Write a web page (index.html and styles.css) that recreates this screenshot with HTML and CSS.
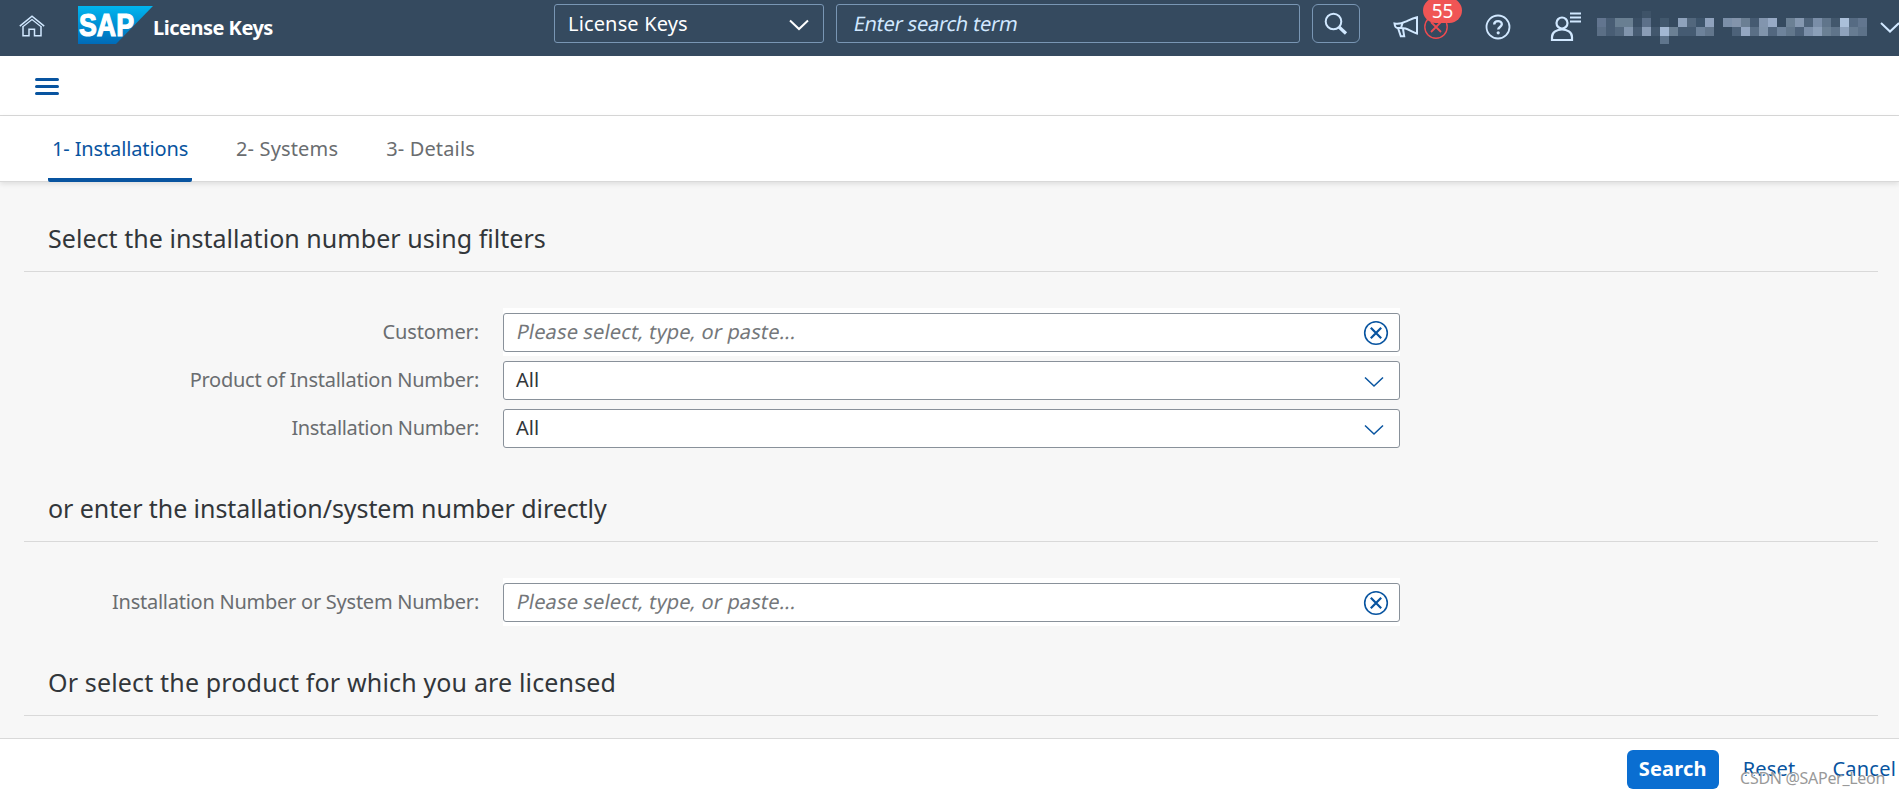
FILE: index.html
```
<!DOCTYPE html>
<html lang="en">
<head>
<meta charset="utf-8">
<title>License Keys</title>
<link rel="stylesheet" href="styles.css">
</head>
<body>
<header class="shell">
  <svg class="home" width="26" height="22" viewBox="0 0 26 22" fill="none" stroke="#d1e8ff" stroke-width="1.5"><path d="M.8 11.2 13 1.2l12.200 10M4 11v9.700h6V14.200h5.500v6.500H22V11"/><path d="M4.200 11.500 13 4.500l8.800 7" stroke-width="1.200"/></svg>
  <svg class="logo" width="75" height="38" viewBox="0 0 75 38"><defs><linearGradient id="sap" x2="0" y2="1"><stop offset="0" stop-color="#00b5ef"/><stop offset="1" stop-color="#006bb8"/></linearGradient></defs><path d="M0 0h75L38 38H0z" fill="url(#sap)"/><text class="logo-text" x="1" y="29.500" textLength="55" lengthAdjust="spacingAndGlyphs">SAP</text></svg>
  <h1 class="app-title">License Keys</h1>
  <div class="scope">License Keys<svg width="20" height="12" viewBox="0 0 20 12" fill="none" stroke="#fff" stroke-width="2"><path d="m1 1.500 9 8.500 9-8.500"/></svg></div>
  <div class="term"><span class="slant">Enter search term</span></div>
  <div class="go"><svg width="24" height="24" viewBox="0 0 24 24" fill="none" stroke="#d1e8ff" stroke-width="2"><circle cx="9.500" cy="9.500" r="7.800"/><path d="m15 15 7 6.500" stroke-width="3.200"/></svg></div>
  <div class="news">
    <svg width="28" height="24" viewBox="0 0 28 24" fill="none" stroke="#d1e8ff" stroke-width="2"><path d="M1.500 8.500c4 .8 7 .2 11-1.800 4-1.800 7-3.500 11.500-4.500v16.300c-5-1.500-8-4-11.500-5-3-.7-5-.5-7.500-.5-2 .3-3.200-1.500-3.500-4.500z"/><path d="m5 13 2.800 8.200h3.400L10 14M9.500 8 8 13"/></svg>
    <svg class="alert" width="24" height="24" viewBox="0 0 24 24" fill="none" stroke="#ee4b50" stroke-width="1.400"><circle cx="12" cy="12" r="11.200"/><path d="m7 7 10 10M17 7 7 17" stroke-width="1.800"/></svg>
    <span class="badge">55</span>
  </div>
  <svg class="help" width="26" height="26" viewBox="0 0 26 26"><circle cx="13" cy="13" r="11.500" fill="none" stroke="#d1e8ff" stroke-width="1.800"/><path d="M9.200 10.500C9.300 6 16.900 6 16.800 10.300c0 2.600-3.600 2.700-3.600 5.300" fill="none" stroke="#d1e8ff" stroke-width="2.400"/><circle cx="13.200" cy="18.800" r="1.600" fill="#d1e8ff"/></svg>
  <svg class="user" width="32" height="30" viewBox="0 0 32 30" fill="none" stroke="#d1e8ff" stroke-width="2.200"><circle cx="12" cy="11" r="5.500"/><path d="M2 28v-3c0-10 20-10 20 0v3zM20 1.500h11M20 5.500h11M20 9.500h11"/></svg>
  <svg class="name" width="272" height="33" viewBox="0 0 272 33" shape-rendering="crispEdges">
    <g id="cells"></g>
  </svg>
  <svg class="more" width="19" height="12" viewBox="0 0 19 12" fill="none" stroke="#d1e8ff" stroke-width="2"><path d="m1 1 9 8.500 9-8.500"/></svg>
</header>
<div class="toolbar"><svg width="24" height="17" viewBox="0 0 24 17" fill="none" stroke="#0854a0" stroke-width="3" stroke-linecap="round"><path d="M1.500 1.500h21M1.500 8.500h21M1.500 15.500h21"/></svg></div>
<nav class="tabs"><a class="tab active">1- Installations</a><a class="tab">2- Systems</a><a class="tab">3- Details</a></nav>
<main class="page">
  <section class="block">
    <h2 class="title t1">Select the installation number using filters</h2>
    <div class="form">
      <label class="label l1">Customer:</label>
      <div class="wrap"><div class="field hint"><span class="slant">Please select, type, or paste...</span><svg class="clear" width="26" height="26" viewBox="0 0 26 26" fill="none" stroke="#0854a0"><circle cx="13" cy="13" r="11.300" stroke-width="1.600"/><path d="m7.800 7.800 10.400 10.400M18.200 7.800 7.800 18.200" stroke-width="2.200"/></svg></div></div>
      <label class="label l2">Product of Installation Number:</label>
      <div class="wrap"><div class="field">All<svg class="arrow" width="20" height="12" viewBox="0 0 20 12" fill="none" stroke="#0854a0" stroke-width="1.500"><path d="m1 1.500 9 8.500 9-8.500"/></svg></div></div>
      <label class="label l3">Installation Number:</label>
      <div class="wrap"><div class="field">All<svg class="arrow" width="20" height="12" viewBox="0 0 20 12" fill="none" stroke="#0854a0" stroke-width="1.500"><path d="m1 1.500 9 8.500 9-8.500"/></svg></div></div>
    </div>
  </section>
  <section class="block">
    <h2 class="title t2">or enter the installation/system number directly</h2>
    <div class="form">
      <label class="label l2">Installation Number or System Number:</label>
      <div class="wrap"><div class="field hint"><span class="slant">Please select, type, or paste...</span><svg class="clear" width="26" height="26" viewBox="0 0 26 26" fill="none" stroke="#0854a0"><circle cx="13" cy="13" r="11.300" stroke-width="1.600"/><path d="m7.800 7.800 10.400 10.400M18.200 7.800 7.800 18.200" stroke-width="2.200"/></svg></div></div>
    </div>
  </section>
  <section class="block">
    <h2 class="title t3">Or select the product for which you are licensed</h2>
  </section>
</main>
<footer class="footer"><button class="btn primary">Search</button><button class="btn reset">Reset</button><button class="btn">Cancel</button><span class="mark">CSDN @SAPer_Leon</span></footer>
<script src="cells.js"></script>
</body>
</html>
```
FILE: cells.js
```
// Colours of the obscured user name, one entry per 9px cell; 0 is an empty cell.
const rows = [
  "62758f 485d74 697f92 697f92 3a4f65 5c7089 0 42586d 0 8ea2bc 52677d 3d546b 8fa2bd 0 7b8fa8 8394ab 6b7f93 455a71 8295ae 97aac5 0 6b8094 8598b0 4f647b 7a8ea8 60758b 42576c aabfd9 566b83 62768f",
  "5b6f86 485d74 53687e 8195ad 475c73 8a9db6 42576d a3b8d2 6b8094 455b72 455b72 6d829a 62768c 0 0 4d6279 94a7c1 5a6f86 8094ab 52677f 6e839b 62778c 4d627a 7b8fa9 8b9fb8 6b8094 5f748a 8ea2bc 677c92 5d7289"
];
const group = document.getElementById("cells");
function cell(x, y, height, color) {
  const r = document.createElementNS("http://www.w3.org/2000/svg", "rect");
  r.setAttribute("x", x);
  r.setAttribute("y", y);
  r.setAttribute("width", 9);
  r.setAttribute("height", height);
  r.setAttribute("fill", "#" + color);
  group.appendChild(r);
}
rows.forEach((row, j) => row.split(" ").forEach((c, i) => {
  if (c !== "0") cell(i * 9, 7 + j * 9, 9, c);
}));
cell(45, 0, 7, "3e5368");
cell(63, 25, 8, "5f758c");
```
FILE: styles.css
```
* { box-sizing: border-box; }
body { margin: 0; height: 796px; display: flex; flex-direction: column; overflow: hidden; background: #f7f7f7; color: #32363a; font: 20px/30px "Noto Sans", sans-serif; }
svg { display: block; flex: none; }
.shell { flex: none; height: 56px; display: flex; align-items: flex-start; background: #354a5f; color: #fff; }
.home { margin: 15px 0 0 19px; }
.logo { margin: 6px 0 0 33px; }
.logo-text { font: bold 31px "Liberation Sans", sans-serif; fill: #fff; stroke: #fff; stroke-width: 1.2px; }
.app-title { margin: 13px 0 0; width: 401px; font-size: 20px; letter-spacing: -0.5px; white-space: nowrap; }
.scope, .term, .go { margin-top: 4px; height: 39px; display: flex; align-items: center; border: 1px solid #7996b4; border-radius: 3px; }
.scope { width: 270px; justify-content: space-between; padding: 0 14px 0 13px; letter-spacing: 0.15px; }
.scope svg { margin-top: 2px; }
.term { width: 464px; margin-left: 12px; padding: 0 17px; color: #d1e8ff; letter-spacing: -0.25px; }
.slant { transform: skewX(-11deg); white-space: nowrap; }
.go { width: 48px; margin-left: 12px; justify-content: center; border-radius: 6px; }
.news { position: relative; width: 92px; margin: 15px 0 0 33px; }
.alert { position: absolute; left: 31px; top: 0; }
.badge { position: absolute; left: 30px; top: -17px; width: 39px; height: 25px; border-radius: 13px; background: #f05555; text-align: center; font-size: 19px; line-height: 26px; }
.help { margin: 14px 0 0; }
.user { margin: 12px 0 0 39px; }
.name { margin: 11px 0 0 15px; }
.more { margin: 22px 0 0 11px; }
.toolbar { flex: none; height: 60px; padding: 22px 0 0 35px; background: #fff; border-bottom: 1px solid #d9d9d9; }
.tabs { flex: none; height: 66px; display: flex; gap: 40px; padding-left: 48px; background: #fff; border-bottom: 1px solid #d9d9d9; box-shadow: 0 2px 5px rgba(0,0,0,.1); }
.tab { height: 66px; padding: 18px 4px 0; color: #6a6d70; letter-spacing: 0.15px; }
.tab.active { width: 144px; border-bottom: 4px solid #0854a0; border-radius: 2px; color: #0854a0; letter-spacing: -0.13px; white-space: nowrap; }
.page { flex: 1; min-height: 0; padding: 31px 21px 0 24px; overflow: hidden; }
.block { margin-bottom: 31px; }
.title { margin: 0 0 36px; height: 59px; padding-left: 24px; border-bottom: 1px solid #d9d9d9; font-size: 25px; font-weight: 400; line-height: 51px; }
.t1 { letter-spacing: 0.04px; }
.t2 { letter-spacing: -0.07px; }
.t3 { letter-spacing: 0.16px; }
.form { display: grid; grid-template-columns: 455px 897px; column-gap: 24px; }
.label { height: 48px; text-align: right; line-height: 47px; color: #6a6d70; white-space: nowrap; }
.l1 { letter-spacing: -0.1px; }
.l2 { letter-spacing: -0.25px; }
.l3 { letter-spacing: -0.33px; }
.wrap { height: 48px; padding-top: 5px; }
.wrap:has(.hint) { background: #fff; }
.field { height: 39px; display: flex; align-items: center; justify-content: space-between; padding: 0 15px 2px 12px; background: #fff; border: 1px solid #89919a; border-radius: 3px; }
.hint { padding: 0 10px 2px 13px; color: #74777a; letter-spacing: 0.13px; }
.clear { margin-top: 2px; }
.arrow { margin-top: 4px; }
.footer { position: relative; flex: none; height: 58px; display: flex; align-items: flex-start; justify-content: flex-end; padding: 11px 3px 0 0; background: #fff; border-top: 1px solid #d9d9d9; }
.btn { height: 39px; margin: 0; padding: 0 0 2px; border: 0; background: none; color: #0854a0; font: 20px/30px "Noto Sans", sans-serif; letter-spacing: 0.2px; }
.primary { width: 92px; margin-right: 24px; border-radius: 6px; background: #0a6ed1; color: #fff; font-weight: 700; }
.reset { margin-right: 37px; }
.mark { position: absolute; right: 14px; bottom: 3px; color: #999; font-size: 16px; letter-spacing: -0.3px; text-shadow: 1px 1px #fff; }
```
